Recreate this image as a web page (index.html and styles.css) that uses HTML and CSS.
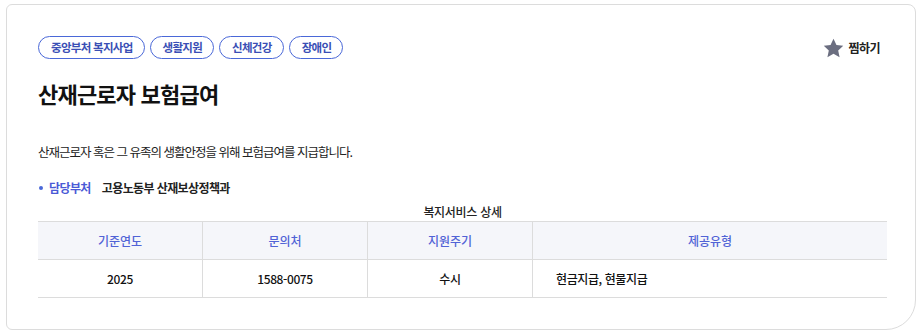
FILE: index.html
```html
<!DOCTYPE html>
<html lang="ko">
<head>
    <meta charset="UTF-8">
    <meta name="viewport" content="width=device-width, initial-scale=1.0">
    <title>산재근로자 보험급여</title>
    <link rel="stylesheet" href="styles.css">
</head>
<body>
    <div class="card">
        <div class="card-top">
            <div class="tags">
                <span class="tag">중앙부처 복지사업</span>
                <span class="tag">생활지원</span>
                <span class="tag">신체건강</span>
                <span class="tag">장애인</span>
            </div>
            <button class="bookmark">
                <svg width="21" height="20" viewBox="0 0 24 23"><path d="M12 0.8l3.4 7.2 7.8 0.9-5.8 5.4 1.6 7.8L12 18.2l-7 3.9 1.6-7.8L0.8 8.9l7.8-0.9z" fill="#6b6e80"/></svg>
                찜하기
            </button>
        </div>

        <h1 class="title">산재근로자 보험급여</h1>

        <p class="desc">산재근로자 혹은 그 유족의 생활안정을 위해 보험급여를 지급합니다.</p>

        <div class="dept">
            <span class="dept-label">담당부처</span>
            <span class="dept-value">고용노동부 산재보상정책과</span>
        </div>

        <table class="detail">
            <caption>복지서비스 상세</caption>
            <thead>
                <tr>
                    <th>기준연도</th>
                    <th>문의처</th>
                    <th>지원주기</th>
                    <th>제공유형</th>
                </tr>
            </thead>
            <tbody>
                <tr>
                    <td>2025</td>
                    <td>1588-0075</td>
                    <td>수시</td>
                    <td class="left">현금지급, 현물지급</td>
                </tr>
            </tbody>
        </table>
    </div>
</body>
</html>
```

FILE: styles.css
```css
body {
    margin: 0;
    padding: 4px 8px 4px 6px;
    font-family: 'Noto Sans CJK KR', 'Noto Sans', sans-serif;
    color: #222;
    background: #fff;
}

.card {
    width: 910px;
    height: 326px;
    box-sizing: border-box;
    padding: 31px 30px 0 31px;
    border: 1px solid #dcdcdc;
    border-radius: 6px 8px 30px 6px;
}

.card-top {
    display: flex;
    justify-content: space-between;
    align-items: center;
}

.tags {
    display: flex;
    gap: 5px;
}

.tag {
    height: 23px;
    line-height: 21px;
    box-sizing: border-box;
    padding: 0 11px 0 12px;
    border: 1px solid #4a68d8;
    border-radius: 12px;
    color: #3a4fb5;
    font-size: 11.5px;
    font-weight: 600;
    letter-spacing: -0.7px;
}

.bookmark {
    display: flex;
    align-items: center;
    gap: 4px;
    margin-right: 5px;
    padding: 0;
    border: none;
    background: none;
    font-family: inherit;
    font-size: 12px;
    font-weight: 700;
    color: #222;
    letter-spacing: -0.5px;
}

.title {
    margin: 18px 0 0;
    font-size: 22px;
    font-weight: 700;
    line-height: 32px;
    color: #111;
    letter-spacing: -0.8px;
}

.desc {
    margin: 34px 0 0;
    font-size: 12.5px;
    line-height: 18px;
    letter-spacing: -1px;
}

.dept {
    display: flex;
    align-items: center;
    margin-top: 18px;
    font-size: 12px;
    line-height: 18px;
    letter-spacing: -0.6px;
}

.dept-label {
    position: relative;
    padding-left: 11px;
    margin-right: 11px;
    color: #4a5ad6;
    font-weight: 600;
}

.dept-label::before {
    content: "";
    position: absolute;
    left: 1px;
    top: 7px;
    width: 4px;
    height: 4px;
    border-radius: 50%;
    background: #4a68d8;
}

.dept-value {
    font-weight: 700;
}

.detail {
    width: 849px;
    margin-top: 7px;
    border-collapse: collapse;
    table-layout: fixed;
    font-size: 12px;
}

.detail caption {
    padding-bottom: 2px;
    line-height: 15px;
    font-weight: 500;
    letter-spacing: -0.3px;
}

.detail th,
.detail td {
    height: 37px;
    padding: 0;
    text-align: center;
    border-top: 1px solid #dcdcdc;
    border-bottom: 1px solid #dcdcdc;
    border-left: 1px solid #dcdcdc;
}

.detail th:first-child,
.detail td:first-child {
    width: 164px;
    border-left: none;
}

.detail th:nth-child(2),
.detail th:nth-child(3) {
    width: 164px;
}

.detail th {
    background: #f5f6fa;
    color: #5163d6;
    font-weight: 500;
}

.detail td {
    font-weight: 500;
    color: #111;
    letter-spacing: -0.4px;
}

.detail td.left {
    text-align: left;
    padding-left: 23px;
}
```
